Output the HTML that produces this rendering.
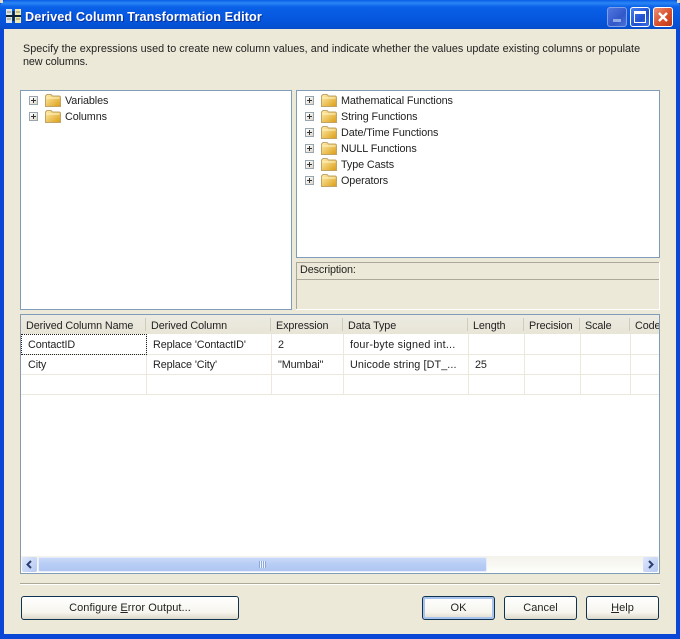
<!DOCTYPE html>
<html><head><meta charset="utf-8">
<style>
html,body{margin:0;padding:0;background:#0a4fd8}
#w{position:relative;width:680px;height:639px;overflow:hidden;background:#0a47d6;font-family:"Liberation Sans",sans-serif;font-size:10.8px;letter-spacing:-.1px;color:#222}
#w div{position:absolute;box-sizing:border-box}
.t{white-space:nowrap;line-height:14px;height:14px}
.pl{width:9px;height:9px;border:1px solid #98a4ae;background:linear-gradient(135deg,#fff,#dcd8cc)}
.pl:before{content:"";position:absolute;left:1px;top:3px;width:5px;height:1px;background:#333}
.pl:after{content:"";position:absolute;left:3px;top:1px;width:1px;height:5px;background:#333}
svg{position:absolute}
.vl{width:1px;background:#ece9dc}
.hl{height:1px;background:#ece9dc}
.hs{width:1px;top:318px;height:13px;background:#cfccbd}
.btn{border:1px solid #0f3350;border-radius:3px;background:linear-gradient(#fff,#f6f5ee 70%,#dcd8ca);text-align:center;line-height:22px;font-size:11px;letter-spacing:.05px}
</style></head><body>
<div id="w">
<svg width="0" height="0" style="position:absolute"><defs>
<linearGradient id="fg" x1="0" y1="0" x2="1" y2="1"><stop offset="0" stop-color="#fff0b0"/><stop offset="1" stop-color="#dc9c14"/></linearGradient>
<symbol id="f" viewBox="0 0 16 13"><path d="M0.5 12.5V2L2 .5H6L7.5 2H14.5L15.5 3V12.5Z" fill="url(#fg)" stroke="#c0a468"/><path d="M1.5 4H14.5" stroke="#fff4c8"/></symbol>
</defs></svg>

<!-- title bar -->
<div style="left:0;top:0;width:680px;height:30px;border-radius:7px 7px 0 0;background:linear-gradient(#0a5ce8 0,#2a86f4 3px,#0a60e8 7px,#0556dd 20px,#0450d2 27px,#0a48c4 30px)"></div>
<div style="left:0;top:0;width:3px;height:3px;background:#dcd8cc"></div>
<div style="right:0;top:0;width:3px;height:3px;background:#dcd8cc"></div>
<svg style="left:6px;top:8px" width="16" height="16"><rect x="0" y="1" width="6" height="14" fill="#d8e4ee"/><rect x="9" y="1" width="6" height="14" fill="#f2e8a8"/><path d="M0 8H15" stroke="#123" stroke-width="2"/><path d="M7.5 3V13" stroke="#123" stroke-width="2"/><path d="M10 4H14M10 11H14M1 4H5M1 11H5" stroke="#8a8f60"/></svg>
<div class="t" style="left:25px;top:10px;color:#fff;font-weight:bold;font-size:12.7px;letter-spacing:.1px;text-shadow:1px 1px 0 #0a2f9a">Derived Column Transformation Editor</div>

<!-- caption buttons -->
<div style="left:607px;top:7px;width:20px;height:20px;border:1px solid #7f9fe8;border-radius:3px;background:linear-gradient(135deg,#4f78e0,#3258c8 60%,#4a70d8)"></div>
<div style="left:613px;top:19px;width:8px;height:3px;background:#8fa8e8"></div>
<div style="left:630px;top:7px;width:20px;height:20px;border:1px solid #fff;border-radius:3px;background:linear-gradient(135deg,#4a80f0,#1f50d0 60%,#3c70e8)"></div>
<div style="left:634px;top:11px;width:12px;height:12px;border:1px solid #fff;border-top:3px solid #fff"></div>
<div style="left:653px;top:7px;width:20px;height:20px;border:1px solid #fff;border-radius:3px;background:linear-gradient(135deg,#ec9078,#d8502c 55%,#c03a18)"></div>
<svg style="left:653px;top:7px" width="20" height="20"><path d="M6 6L14 14M14 6L6 14" stroke="#fff" stroke-width="2.4"/></svg>

<!-- body -->
<div style="left:4px;top:29px;width:672px;height:605px;background:#ece9d8"></div>
<div class="t" style="left:23px;top:42px;letter-spacing:.025px">Specify the expressions used to create new column values, and indicate whether the values update existing columns or populate</div>
<div class="t" style="left:23px;top:55px">new columns.</div>

<!-- left tree -->
<div style="left:20px;top:90px;width:272px;height:220px;background:#fff;border:1px solid #7f9db9"></div>
<div class="pl" style="left:29px;top:96px"></div>
<svg style="left:45px;top:94px" width="16" height="13"><use href="#f"/></svg>
<div class="t" style="left:65px;top:94px">Variables</div>
<div class="pl" style="left:29px;top:112px"></div>
<svg style="left:45px;top:110px" width="16" height="13"><use href="#f"/></svg>
<div class="t" style="left:65px;top:110px">Columns</div>

<!-- right tree -->
<div style="left:296px;top:90px;width:364px;height:168px;background:#fff;border:1px solid #7f9db9"></div>
<div class="pl" style="left:305px;top:96px"></div>
<svg style="left:321px;top:94px" width="16" height="13"><use href="#f"/></svg>
<div class="t" style="left:341px;top:94px">Mathematical Functions</div>
<div class="pl" style="left:305px;top:112px"></div>
<svg style="left:321px;top:110px" width="16" height="13"><use href="#f"/></svg>
<div class="t" style="left:341px;top:110px">String Functions</div>
<div class="pl" style="left:305px;top:128px"></div>
<svg style="left:321px;top:126px" width="16" height="13"><use href="#f"/></svg>
<div class="t" style="left:341px;top:126px">Date/Time Functions</div>
<div class="pl" style="left:305px;top:144px"></div>
<svg style="left:321px;top:142px" width="16" height="13"><use href="#f"/></svg>
<div class="t" style="left:341px;top:142px">NULL Functions</div>
<div class="pl" style="left:305px;top:160px"></div>
<svg style="left:321px;top:158px" width="16" height="13"><use href="#f"/></svg>
<div class="t" style="left:341px;top:158px">Type Casts</div>
<div class="pl" style="left:305px;top:176px"></div>
<svg style="left:321px;top:174px" width="16" height="13"><use href="#f"/></svg>
<div class="t" style="left:341px;top:174px">Operators</div>

<!-- description -->
<div style="left:296px;top:262px;width:364px;height:18px;border-top:1px solid #aca899;border-bottom:1px solid #aca899;border-right:1px solid #fff"></div>
<div style="left:296px;top:262px;width:1px;height:48px;background:#aca899"></div>
<div style="left:659px;top:262px;width:1px;height:48px;background:#fff"></div>
<div style="left:296px;top:309px;width:364px;height:1px;background:#fff"></div>
<div class="t" style="left:300px;top:263px">Description:</div>

<!-- grid -->
<div style="left:20px;top:314px;width:640px;height:260px;background:#fff;border:1px solid #7f9db9;border-left-color:#8a9aa8"></div>
<div style="left:21px;top:315px;width:638px;height:19px;background:linear-gradient(#ecebe2,#e8e5d6)"></div>
<div class="hs" style="left:145px"></div><div class="hs" style="left:270px"></div><div class="hs" style="left:342px"></div><div class="hs" style="left:467px"></div><div class="hs" style="left:523px"></div><div class="hs" style="left:579px"></div><div class="hs" style="left:629px"></div>
<div class="t" style="left:26px;top:319px">Derived Column Name</div>
<div class="t" style="left:151px;top:319px">Derived Column</div>
<div class="t" style="left:276px;top:319px">Expression</div>
<div class="t" style="left:348px;top:319px">Data Type</div>
<div class="t" style="left:473px;top:319px">Length</div>
<div class="t" style="left:529px;top:319px">Precision</div>
<div class="t" style="left:585px;top:319px">Scale</div>
<div class="t" style="left:635px;top:319px;width:24px;overflow:hidden">Code Page</div>

<div class="hl" style="left:21px;top:354px;width:638px"></div>
<div class="hl" style="left:21px;top:374px;width:638px"></div>
<div class="hl" style="left:21px;top:394px;width:638px"></div>
<div class="vl" style="left:146px;top:334px;height:60px"></div>
<div class="vl" style="left:271px;top:334px;height:60px"></div>
<div class="vl" style="left:343px;top:334px;height:60px"></div>
<div class="vl" style="left:468px;top:334px;height:60px"></div>
<div class="vl" style="left:524px;top:334px;height:60px"></div>
<div class="vl" style="left:580px;top:334px;height:60px"></div>
<div class="vl" style="left:630px;top:334px;height:60px"></div>
<div style="left:21px;top:334px;width:126px;height:21px;border:1px dotted #222"></div>

<div class="t" style="left:28px;top:338px">ContactID</div>
<div class="t" style="left:153px;top:338px">Replace 'ContactID'</div>
<div class="t" style="left:278px;top:338px">2</div>
<div class="t" style="left:350px;top:338px;letter-spacing:.2px">four-byte signed int...</div>
<div class="t" style="left:28px;top:358px">City</div>
<div class="t" style="left:153px;top:358px">Replace 'City'</div>
<div class="t" style="left:278px;top:358px">"Mumbai"</div>
<div class="t" style="left:350px;top:358px;letter-spacing:.1px">Unicode string [DT_...</div>
<div class="t" style="left:475px;top:358px">25</div>

<!-- scrollbar -->
<div style="left:21px;top:556px;width:638px;height:17px;background:linear-gradient(#f3f2ea,#fefefb)"></div>
<div style="left:22px;top:557px;width:15px;height:15px;border-radius:2px;background:linear-gradient(135deg,#dfe8fb,#b4c8f2)"></div>
<svg style="left:22px;top:557px" width="15" height="15"><path d="M9 4L5.5 7.5L9 11" fill="none" stroke="#2a3f70" stroke-width="2"/></svg>
<div style="left:38px;top:557px;width:449px;height:15px;border:1px solid #e6ecfa;border-radius:2px;background:linear-gradient(#c8d8f8,#b8cdf5 50%,#b0c6f2)"></div>
<div style="left:259px;top:561px;width:7px;height:7px;background:repeating-linear-gradient(90deg,#8da8de 0 1px,#eef3fc 1px 2px)"></div>
<div style="left:643px;top:557px;width:15px;height:15px;border-radius:2px;background:linear-gradient(135deg,#dfe8fb,#b4c8f2)"></div>
<svg style="left:643px;top:557px" width="15" height="15"><path d="M6 4L9.5 7.5L6 11" fill="none" stroke="#2a3f70" stroke-width="2"/></svg>

<!-- separator -->
<div style="left:20px;top:583px;width:640px;height:1px;background:#aca899"></div>
<div style="left:20px;top:584px;width:640px;height:1px;background:#fff"></div>

<!-- buttons -->
<div class="btn" style="left:21px;top:596px;width:218px;height:24px">Configure <u>E</u>rror Output...</div>
<div class="btn" style="left:422px;top:596px;width:73px;height:24px;box-shadow:inset 0 0 0 2px #a8c4ec">OK</div>
<div class="btn" style="left:504px;top:596px;width:73px;height:24px">Cancel</div>
<div class="btn" style="left:586px;top:596px;width:73px;height:24px"><u>H</u>elp</div>
</div>
</body></html>
